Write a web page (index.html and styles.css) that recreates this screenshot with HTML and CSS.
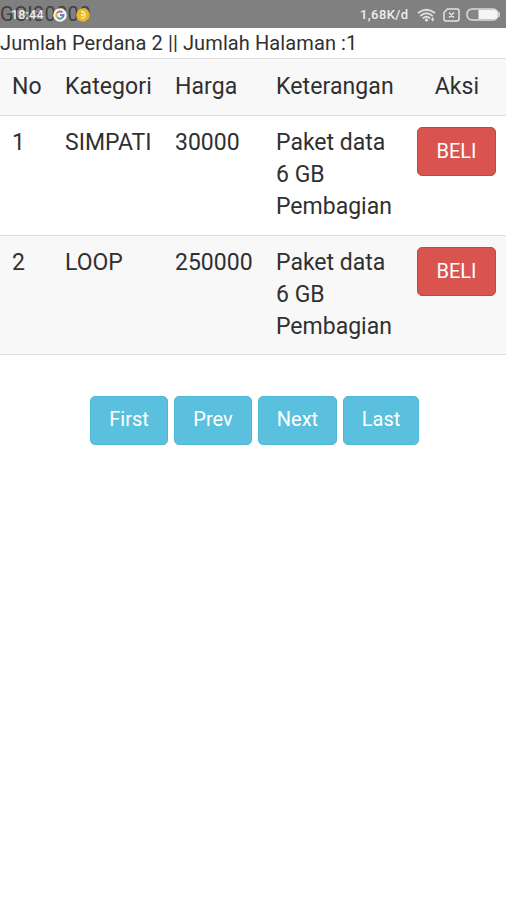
FILE: index.html
```html
<!DOCTYPE html>
<html lang="id">
<head>
<meta charset="utf-8">
<title>Perdana</title>
<link rel="stylesheet" href="styles.css">
</head>
<body>
<header class="status">
  <span class="page-code">GCI30000</span>
  <div class="status-left">
    <span class="clock">18:44</span>
    <svg class="app-icon" viewBox="0 0 14 14"><circle cx="7" cy="7" r="6.8" fill="#f5f5f5"/><g fill="none" stroke-width="2"><path d="M4 5A3.6 3.6 0 0 1 9.5 4.4" stroke="#df6258"/><path d="M4 5A3.6 3.6 0 0 0 4.3 9.4" stroke="#dfb34d"/><path d="M4.3 9.4A3.6 3.6 0 0 0 9 9.9" stroke="#55a777"/><path d="M7 7h3.5Q10.5 9 9 9.9" stroke="#5489ce"/></g></svg>
    <svg class="app-icon coin" viewBox="0 0 14 14"><circle cx="7" cy="7" r="6.8" fill="#e8b72d"/><path d="M5 3.5q4 0 4 3.5t-4 3M5 6l2 1-2 1" fill="none" stroke="#fff0a5" stroke-width="1.3"/></svg>
  </div>
  <div class="status-right">
    <span class="speed">1,68K/d</span>
    <svg class="wifi" viewBox="0 0 20 14"><g fill="none" stroke="#dedede" stroke-width="2"><path d="M1 5Q10-2 19 5"/><path d="M3.5 8Q10 2.5 16.5 8"/><path d="M6.2 10.7Q10 7 13.8 10.7"/></g><circle cx="10" cy="12.2" r="1.6" fill="#e6e6e6"/><path d="M16.5 9v4M15 11.3l1.5 1.7 1.5-1.7" fill="none" stroke="#ddd" stroke-width="1.2"/></svg>
    <svg class="sim" viewBox="0 0 17 14"><path d="M4.5 1H14q2 0 2 2v8q0 2-2 2H3q-2 0-2-2V4.5zM6 4.5l5 5M11 4.5l-5 5" fill="none" stroke="#e4e4e4" stroke-width="1.5"/></svg>
    <svg class="battery" viewBox="0 0 35 13"><rect x="1" y="1" width="31" height="11" rx="5" fill="#858585" stroke="#ddd" stroke-width="1.5"/><path d="M12.5 2H28q3.5 0 3.5 4.5T28 11H12.5z" fill="#f5f5f5"/><path d="M33.2 4v5" stroke="#ddd" stroke-width="1.2"/></svg>
  </div>
</header>
<p class="summary">Jumlah Perdana 2 || Jumlah Halaman :1</p>
<table class="products">
  <colgroup><col class="c-no"><col class="c-kat"><col class="c-harga"><col class="c-ket"><col></colgroup>
  <thead><tr><th>No</th><th>Kategori</th><th>Harga</th><th>Keterangan</th><th class="action">Aksi</th></tr></thead>
  <tbody>
    <tr><td>1</td><td>SIMPATI</td><td>30000</td><td>Paket data<br>6 GB<br>Pembagian</td><td class="action"><button class="btn buy">BELI</button></td></tr>
    <tr><td>2</td><td>LOOP</td><td>250000</td><td>Paket data<br>6 GB<br>Pembagian</td><td class="action"><button class="btn buy">BELI</button></td></tr>
  </tbody>
</table>
<nav class="pager">
  <button class="btn">First</button>
  <button class="btn">Prev</button>
  <button class="btn wide">Next</button>
  <button class="btn narrow">Last</button>
</nav>
</body>
</html>
```
FILE: styles.css
```css
* { box-sizing: border-box; }
body {
  margin: 0;
  min-height: 900px;
  background: #fff;
  color: #303030;
  font-family: Roboto, "Liberation Sans", sans-serif;
}
.status {
  position: relative;
  display: flex;
  justify-content: space-between;
  height: 28px;
  background: #808080;
  color: #eee;
}
.page-code {
  position: absolute;
  left: 0;
  top: 2px;
  color: #404040;
  font-size: 20px;
  line-height: 24px;
  letter-spacing: .3px;
}
.status-left, .status-right {
  position: relative;
  display: flex;
  align-items: center;
  height: 29px;
}
.status-left { padding-left: 11px; }
.clock { width: 42px; font-size: 12.5px; font-weight: 500; letter-spacing: .2px; }
.app-icon { width: 14px; height: 14px; }
.coin { margin-left: 9px; }
.status-right { padding-right: 5px; }
.speed { width: 57px; font-size: 13px; font-weight: 500; letter-spacing: .4px; white-space: nowrap; }
.wifi { width: 19px; height: 14px; }
.sim { width: 17px; height: 14px; margin-left: 7px; }
.battery { width: 35px; height: 13px; margin-left: 6px; }
.summary {
  height: 30px;
  margin: 0;
  font-size: 20px;
  line-height: 30px;
  letter-spacing: .1px;
  white-space: nowrap;
}
.products {
  width: 100%;
  table-layout: fixed;
  border-collapse: separate;
  border-spacing: 0;
  font-size: 23px;
  line-height: 32px;
}
.c-no { width: 53px; }
.c-kat { width: 110px; }
.c-harga { width: 101px; }
.c-ket { width: 141px; }
th, td {
  padding: 11px 0 12px 12px;
  border-top: 1px solid #dedede;
  font-weight: 400;
  text-align: left;
  vertical-align: top;
  white-space: nowrap;
}
th { height: 57px; padding-top: 12px; padding-bottom: 11px; letter-spacing: .1px; }
td { height: 120px; }
thead tr, tbody tr:nth-child(even) { background: #f8f8f8; }
tbody tr:last-child td { height: 120px; padding-bottom: 11px; border-bottom: 1px solid #dedede; }
th.action { padding-left: 3px; text-align: center; }
.btn {
  width: 78px;
  height: 49px;
  padding: 0 0 2px;
  border: 1px solid #4bb8d8;
  border-radius: 5px;
  background: #5bc0de;
  color: #fff;
  font-family: inherit;
  font-size: 20px;
  line-height: 28px;
}
.buy { display: block; width: 79px; background: #d9534f; border-color: #d43f3a; }
.pager { display: flex; justify-content: center; gap: 6px; margin-top: 41px; padding-left: 3px; }
.pager .btn { padding-bottom: 3px; }
.wide { width: 79px; }
.narrow { width: 76px; }
```
